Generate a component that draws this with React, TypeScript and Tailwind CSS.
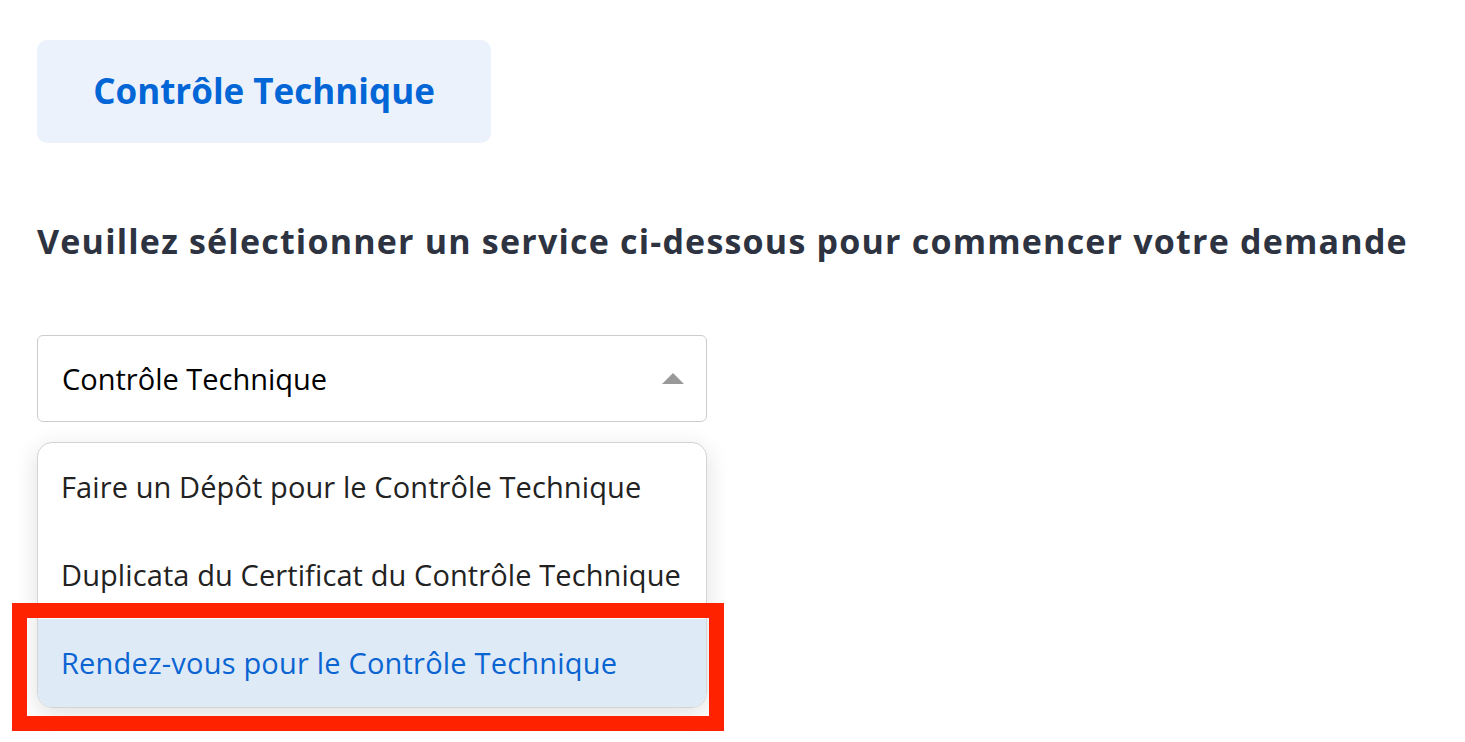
import React from 'react'

const OPTIONS = [
  'Faire un Dépôt pour le Contrôle Technique',
  'Duplicata du Certificat du Contrôle Technique',
  'Rendez-vous pour le Contrôle Technique',
]

export default function App() {
  const active = 2

  return (
    <div className="min-h-screen bg-white pl-[37px] pt-[40px] font-['Open_Sans',sans-serif]">
      {/* Service badge */}
      <div className="flex h-[103px] w-[454px] items-center justify-center rounded-[10px] bg-[#ebf2fc]">
        <span className="text-[35px] font-bold text-[#0366d6]">Contrôle Technique</span>
      </div>

      <h2 className="mt-[78px] text-[34px] font-bold leading-[40px] tracking-[1.2px] text-[#2d3340]">
        Veuillez sélectionner un service ci-dessous pour commencer votre demande
      </h2>

      {/* Select */}
      <div className="mt-[74px] flex h-[87px] w-[670px] items-center justify-between rounded-[6px] border border-[#cccccc] pl-[24px] pr-[22px]">
        <span className="text-[29px] text-black">Contrôle Technique</span>
        <svg width="22" height="11" viewBox="0 0 22 11">
          <path d="M0 11 L11 0 L22 11 Z" fill="#999999" />
        </svg>
      </div>

      {/* Dropdown menu */}
      <div className="relative mt-[20px] w-[670px]">
        <div className="overflow-hidden rounded-[15px] border border-[#d4d4d4] bg-white shadow-[0_6px_24px_rgba(0,0,0,0.13)]">
          {OPTIONS.map((opt, i) => (
            <div
              key={opt}
              className={
                i === active
                  ? 'flex h-[88px] items-center bg-[#deebf7] pl-[23px] text-[29px] tracking-[0.2px] text-[#0a64d2]'
                  : 'flex h-[88px] items-center pl-[23px] text-[29px] tracking-[0.1px] text-[#222222]'
              }
            >
              {opt}
            </div>
          ))}
        </div>

        {/* Highlight annotation */}
        <div className="pointer-events-none absolute left-[-25px] top-[161px] h-[128px] w-[712px] border-[15px] border-[#ff2200]" />
      </div>
    </div>
  )
}
